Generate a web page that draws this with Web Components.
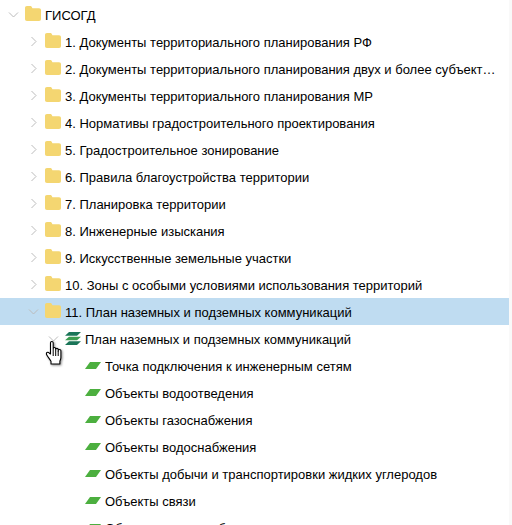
<!doctype html>
<html lang="ru">
<head>
<meta charset="utf-8">
<title>ГИСОГД</title>
<style>
    html, body { margin: 0; height: 525px; overflow: hidden; background: #fff; }
    body { font: 13px "Liberation Sans", Arial, sans-serif; color: #000; position: relative; display: flex; }
    tree-view { flex: 1; min-width: 0; }
</style>
</head>
<body>
<tree-view>
    <tree-row level="0" arrow="down" icon="folder">ГИСОГД</tree-row>
    <tree-row level="1" arrow="right" icon="folder">1. Документы территориального планирования РФ</tree-row>
    <tree-row level="1" arrow="right" icon="folder">2. Документы территориального планирования двух и более субъектов РФ</tree-row>
    <tree-row level="1" arrow="right" icon="folder">3. Документы территориального планирования МР</tree-row>
    <tree-row level="1" arrow="right" icon="folder">4. Нормативы градостроительного проектирования</tree-row>
    <tree-row level="1" arrow="right" icon="folder">5. Градостроительное зонирование</tree-row>
    <tree-row level="1" arrow="right" icon="folder">6. Правила благоустройства территории</tree-row>
    <tree-row level="1" arrow="right" icon="folder">7. Планировка территории</tree-row>
    <tree-row level="1" arrow="right" icon="folder">8. Инженерные изыскания</tree-row>
    <tree-row level="1" arrow="right" icon="folder">9. Искусственные земельные участки</tree-row>
    <tree-row level="1" arrow="right" icon="folder">10. Зоны с особыми условиями использования территорий</tree-row>
    <tree-row level="1" arrow="down" icon="folder" selected>11. План наземных и подземных коммуникаций</tree-row>
    <tree-row level="2" arrow="down" icon="stack">План наземных и подземных коммуникаций</tree-row>
    <tree-row level="3" icon="layer">Точка подключения к инженерным сетям</tree-row>
    <tree-row level="3" icon="layer">Объекты водоотведения</tree-row>
    <tree-row level="3" icon="layer">Объекты газоснабжения</tree-row>
    <tree-row level="3" icon="layer">Объекты водоснабжения</tree-row>
    <tree-row level="3" icon="layer">Объекты добычи и транспортировки жидких углеродов</tree-row>
    <tree-row level="3" icon="layer">Объекты связи</tree-row>
    <tree-row level="3" icon="layer">Объекты теплоснабжения</tree-row>
</tree-view>
<scroll-track></scroll-track>
<hand-cursor></hand-cursor>

<script>
    "use strict";

    const ICONS = {
        folder: `<svg style="margin-top:-2px" width="16" height="15" viewBox="0 0 16 15"><path fill="#f4d671" d="M0 2C0 .7.7 0 2 0h3.200c.8 0 1.200.3 1.600 1l.6 1.200H14c1.300 0 2 .7 2 2V13c0 1.300-.7 2-2 2H2c-1.300 0-2-.7-2-2z"/></svg>`,
        stack: `<svg width="16" height="13" viewBox="0 0 16 13"><path fill="#1a7558" d="M4 0h12l-4 3.700H0z"/><path fill="#3c9c50" d="M4 4.700h12l-4 3.600H0z"/><path fill="#1a7558" d="M4 9.300h12L12 13H0z"/></svg>`,
        layer: `<svg width="16" height="7" viewBox="0 0 16 7"><path fill="#4caf3f" d="M5 0h11l-5 7H0z"/></svg>`
    };

    class TreeView extends HTMLElement {
        constructor() {
            super();
            const shadow = this.attachShadow({mode: 'open'});
            shadow.innerHTML = `
                <style>
                    :host { display: flex; flex-direction: column; padding-top: 1px; }
                </style>
                <slot></slot>`;
        }
    }

    window.customElements.define('tree-view', TreeView);

    class ScrollTrack extends HTMLElement {
        constructor() {
            super();
            const shadow = this.attachShadow({mode: 'open'});
            shadow.innerHTML = `<style>:host { display: block; flex: none; width: 3px; background: #f9f9f9; }</style>`;
        }
    }

    window.customElements.define('scroll-track', ScrollTrack);

    class TreeRow extends HTMLElement {
        constructor() {
            super();
            const shadow = this.attachShadow({mode: 'open'});
            const level = Number(this.getAttribute('level'));
            const arrow = this.getAttribute('arrow');
            const icon = this.getAttribute('icon');
            let chevron = '';
            if(arrow === 'down') chevron = '<path d="M1 3.500l4.500 4.500L10 3.500"/>';
            if(arrow === 'right') chevron = '<path d="M3.500 1L8 5.500 3.500 10"/>';

            shadow.innerHTML = `
                <style>
                    :host { display: flex; align-items: center; height: 27px; flex: none; }
                    :host([selected]) { background: #bfdcf1; }
                    .indent { flex: none; width: ${8 + level * 20}px; }
                    .arrow { flex: none; width: 11px; height: 11px; margin-right: 6px; }
                    .arrow path { fill: none; stroke: #bcbcbc; stroke-width: 1; }
                    .icon { flex: none; width: 16px; margin-right: 4px; display: flex; justify-content: center; }
                    .label { flex: 1; min-width: 0; overflow: hidden; white-space: nowrap; text-overflow: ellipsis; padding: 2px 10px 0 0; }
                </style>
                <span class="indent"></span>
                <svg class="arrow" viewBox="0 0 11 11">${chevron}</svg>
                <span class="icon">${ICONS[icon]}</span>
                <span class="label"><slot></slot></span>`;
        }
    }

    window.customElements.define('tree-row', TreeRow);

    class HandCursor extends HTMLElement {
        constructor() {
            super();
            const shadow = this.attachShadow({mode: 'open'});
            shadow.innerHTML = `
                <style>
                    :host { position: absolute; left: 46px; top: 341px; width: 17px; height: 24px; }
                    svg { display: block; overflow: visible; filter: drop-shadow(1.500px 1.500px 1.200px rgba(0,0,0,.45)); }
                </style>
                <svg width="17" height="24" viewBox="0 0 17 24">
                    <path fill="#fff" stroke="#000" stroke-width="1.100" stroke-linejoin="round" d="M4.500 13V1.800C4.500.9 5 .5 5.800.5S7.200.9 7.200 1.800V8.500 7.700c0-.8.500-1.200 1.200-1.200s1.300.4 1.300 1.200V9.500 8.500c0-.7.500-1.100 1.200-1.100s1.300.4 1.300 1.100v2-1c0-.7.6-1 1.200-1s1.500.4 1.500 1.100v6.900c0 1.500-.6 2.500-1 3.500v3H5v-2.800C3.500 18 2 16 .8 14c-.6-1-.5-2.100.2-2.500s1.700 0 2.400.7z"/>
                    <path fill="none" stroke="#000" d="M7.200 9v6M9.700 10v5M12.200 10.500V15"/>
                </svg>`;
        }
    }

    window.customElements.define('hand-cursor', HandCursor);
</script>
</body>
</html>
